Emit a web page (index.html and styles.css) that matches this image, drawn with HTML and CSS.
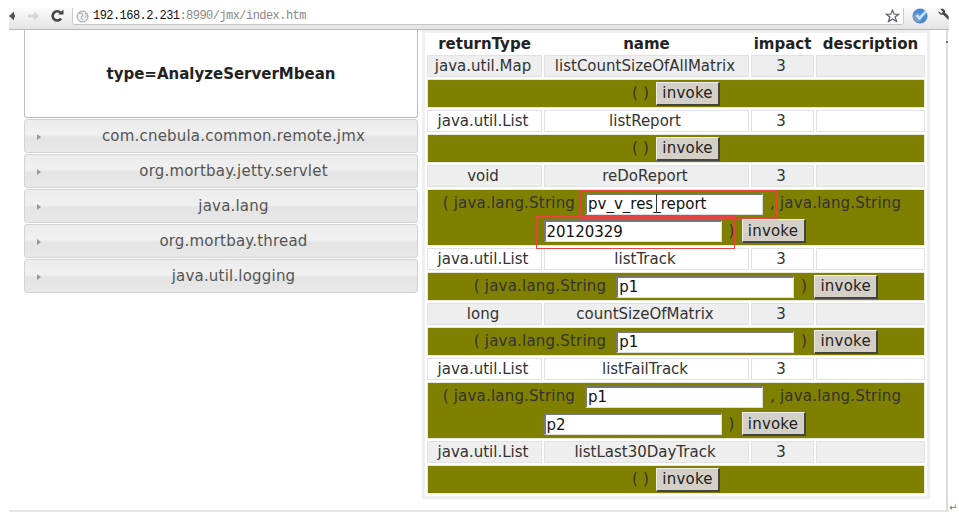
FILE: index.html
```html
<!DOCTYPE html>
<html lang="en">
<head>
<meta charset="utf-8">
<title>jmx</title>
<link rel="stylesheet" href="styles.css">
</head>
<body>
<div class="window">
  <header class="toolbar">
    <svg class="tb-icon back" width="6" height="12" viewBox="0 0 6 12"><path d="M0 6L5 1.500V4.500H6V7.500H5V10.500Z" fill="#555"/></svg>
    <svg class="tb-icon fwd" width="13" height="12" viewBox="0 0 13 12"><path d="M1 4.500H7V1.500L12 6L7 10.500V7.500H1Z" fill="#d4d4d4"/></svg>
    <svg class="tb-icon reload" width="14" height="14" viewBox="0 0 14 14"><path d="M11 9.500A4.600 4.600 0 1 1 10.500 3.600" fill="none" stroke="#444" stroke-width="2.600"/><path d="M8 5.600H13.500V0.500Z" fill="#444"/></svg>
    <div class="omnibox">
      <svg class="globe" width="13" height="13" viewBox="0 0 13 13"><circle cx="6.500" cy="6.500" r="5.500" fill="#eef1f4" stroke="#999"/><path d="M3 3.500L6 3L7 5.500L5 7L6.500 10M9 3L10.500 5.500L9 7.500" fill="none" stroke="#aaa"/></svg>
      <span class="host">192.168.2.231</span><span class="path">:8990/jmx/index.htm</span>
      <svg class="star" width="15" height="14" viewBox="0 0 17 16"><path d="M8.500 1.500L10.500 6H15.500L11.500 9.200L13 14.200L8.500 11.300L4 14.200L5.500 9.200L1.500 6H6.500Z" fill="#fff" stroke="#5a6270" stroke-width="1.400"/></svg>
    </div>
    <svg class="ball" width="16" height="16" viewBox="0 0 18 18"><circle cx="9" cy="9" r="8.500" fill="#4a88d8"/><circle cx="6" cy="11" r="5" fill="#7f9cc0"/><path d="M5 8L8.500 11.500L15.500 4" fill="none" stroke="#bfe4fb" stroke-width="3"/></svg>
    <svg class="wrench" width="11" height="12" viewBox="0 0 11 13"><path d="M0 3L3 6L5 4L2 1C5 0 8 2 7 5L11 9V13L5 7C2 8 0 6 0 3Z" fill="#444"/></svg>
  </header>

  <main class="content">
    <section class="tree">
      <div class="selected">type=AnalyzeServerMbean</div>
      <div class="group"><i class="arrow"></i>com.cnebula.common.remote.jmx</div>
      <div class="group"><i class="arrow"></i>org.mortbay.jetty.servlet</div>
      <div class="group"><i class="arrow"></i>java.lang</div>
      <div class="group"><i class="arrow"></i>org.mortbay.thread</div>
      <div class="group"><i class="arrow"></i>java.util.logging</div>
    </section>

    <section class="panel">
      <table class="ops">
        <colgroup><col class="c1"><col class="c2"><col class="c3"><col class="c4"></colgroup>
        <thead><tr><th>returnType</th><th>name</th><th>impact</th><th>description</th></tr></thead>
        <tbody>
          <tr class="alt"><td>java.util.Map</td><td>listCountSizeOfAllMatrix</td><td>3</td><td></td></tr>
          <tr><td colspan="4" class="args">( ) <button class="invoke">invoke</button></td></tr>
          <tr><td>java.util.List</td><td>listReport</td><td>3</td><td></td></tr>
          <tr><td colspan="4" class="args">( ) <button class="invoke">invoke</button></td></tr>
          <tr class="alt"><td>void</td><td>reDoReport</td><td>3</td><td></td></tr>
          <tr><td colspan="4" class="args wrapped">( java.lang.String <input class="param" value="pv_v_res_report"> , java.lang.String <input class="param" value="20120329"> ) <button class="invoke">invoke</button></td></tr>
          <tr><td>java.util.List</td><td>listTrack</td><td>3</td><td></td></tr>
          <tr><td colspan="4" class="args">( java.lang.String <input class="param" value="p1"> ) <button class="invoke">invoke</button></td></tr>
          <tr class="alt"><td>long</td><td>countSizeOfMatrix</td><td>3</td><td></td></tr>
          <tr><td colspan="4" class="args">( java.lang.String <input class="param" value="p1"> ) <button class="invoke">invoke</button></td></tr>
          <tr><td>java.util.List</td><td>listFailTrack</td><td>3</td><td></td></tr>
          <tr><td colspan="4" class="args wrapped">( java.lang.String <input class="param" value="p1"> , java.lang.String <input class="param" value="p2"> ) <button class="invoke">invoke</button></td></tr>
          <tr class="alt"><td>java.util.List</td><td>listLast30DayTrack</td><td>3</td><td></td></tr>
          <tr><td colspan="4" class="args">( ) <button class="invoke">invoke</button></td></tr>
        </tbody>
      </table>
    </section>
    <div class="scrollbar"><span class="thumb"></span></div>
  </main>
  <div class="mark mark-a"></div>
  <div class="mark mark-b"></div>
  <div class="caret"></div>
  <span class="return">↵</span>
</div>
</body>
</html>
```

FILE: styles.css
```css
html, body {
  margin: 0;
  height: 100%;
  background: #fff;
  overflow: hidden;
}
.window {
  position: relative;
  width: 959px;
  height: 517px;
  padding: 8px 10px 0 9px;
  box-sizing: border-box;
  font-family: "DejaVu Sans", Verdana, sans-serif;
  font-size: 15px;
  color: #333;
}
.toolbar {
  height: 16px;
  padding-bottom: 5px;
  display: flex;
  align-items: center;
  background: linear-gradient(#fbfbfb, #e4e4e4);
  border-bottom: 1px solid #b9b9b9;
}
.tb-icon { flex: none; }
.back { margin-right: 12px; }
.fwd { margin-right: 10px; }
.reload { margin-right: 8px; }
.omnibox {
  flex: 1;
  align-self: stretch;
  display: flex;
  align-items: center;
  height: 16px;
  background: #fff;
  border-left: 1px solid #ccc;
  border-right: 1px solid #ccc;
  border-bottom: 1px solid #c4c4c4;
  border-radius: 0 0 3px 3px;
  padding: 0 3px 0 3px;
  font-family: "Liberation Mono", monospace;
  font-size: 12px;
  letter-spacing: -0.55px;
  margin-right: 8px;
}
.globe { margin-right: 4px; flex: none; }
.host { color: #111; }
.path { color: #888; flex: 1; }
.star { flex: none; }
.ball { flex: none; margin-right: 10px; }
.wrench { flex: none; margin-top: -4px; }
.content {
  display: flex;
  align-items: flex-start;
  height: 480px;
  padding-left: 15px;
  border-bottom: 2px solid #e6e6e2;
}
.tree {
  width: 394px;
  flex: none;
  margin-right: 4px;
}
.selected {
  height: 87px;
  display: flex;
  align-items: center;
  justify-content: center;
  border: 1px solid #bbb;
  border-top: 0;
  border-radius: 0 0 3px 3px;
  background: #fff;
  font-weight: 700;
  color: #222;
  margin-bottom: 1px;
}
.group {
  position: relative;
  height: 32px;
  line-height: 33px;
  margin-bottom: 1px;
  border: 1px solid #d3d3d3;
  border-radius: 3px;
  background: linear-gradient(#ececec 0%, #f0f0f0 45%, #e4e4e4 55%, #e8e8e8 100%);
  text-align: center;
  color: #555;
  padding-left: 25px;
  letter-spacing: 0.2px;
}
.arrow {
  position: absolute;
  left: 12px;
  top: 14px;
  border-left: 4px solid #999;
  border-top: 3px solid transparent;
  border-bottom: 3px solid transparent;
}
.panel {
  width: 502px;
  flex: none;
  padding: 3px 3px 3px;
  background: #efefef;
}
.ops {
  width: 502px;
  table-layout: fixed;
  border-collapse: separate;
  border-spacing: 2px;
  background: #fff;
  font-size: 15px;
  margin: 0;
}
.c1 { width: 115px; }
.c2 { width: 205px; }
.c3 { width: 63px; }
.ops th {
  height: 18px;
  padding: 0;
  font-weight: 700;
  color: #222;
  line-height: 18px;
}
.ops td {
  height: 20px;
  padding: 0 3px 0 0;
  border: 1px solid #e2e2e2;
  background: #fff;
  text-align: center;
  line-height: 20px;
}
.ops tr.alt td { background: #eee; }
.ops td.args {
  height: auto;
  padding: 0 4px;
  background: #808000;
  border-color: #e8e8d8;
  line-height: 27px;
  letter-spacing: 0.2px;
  color: #333;
}
.ops td.wrapped {
  padding: 0 12px 0 4px;
  line-height: 27.5px;
}
.param {
  width: 178px;
  height: 22px;
  box-sizing: border-box;
  padding: 0 1px;
  margin: 0 2px 0 5px;
  border-width: 2px 1px 1px 2px;
  border-style: solid;
  border-color: #777 #ddd #ddd #777;
  background: #fff;
  color: #111;
  font: 15px "DejaVu Sans", Verdana, sans-serif;
  vertical-align: middle;
}
.invoke {
  width: 64px;
  height: 24px;
  padding: 0;
  margin-left: 2px;
  border-width: 1px 2px 2px 1px;
  border-style: solid;
  border-color: #eee #444 #444 #eee;
  background: #d4d0c8;
  color: #222;
  font: 15px "DejaVu Sans", Verdana, sans-serif;
  letter-spacing: 0.2px;
  vertical-align: middle;
}
.scrollbar {
  position: absolute;
  left: 946px;
  top: 30px;
  width: 2px;
  height: 480px;
  background: #dcdcd8;
}
.thumb {
  position: absolute;
  left: 0;
  top: 11px;
  width: 2px;
  height: 2px;
  background: #777;
}
.mark {
  position: absolute;
  box-sizing: border-box;
  border: 1px solid #e84444;
  pointer-events: none;
}
.mark-a { left: 580px; top: 190px; width: 197px; height: 29px; }
.mark-b { left: 536px; top: 216px; width: 199px; height: 33px; }
.caret {
  position: absolute;
  left: 656px;
  top: 194px;
  width: 1px;
  height: 19px;
  background: #333;
}
.return {
  position: absolute;
  left: 949px;
  top: 502px;
  font-size: 10px;
  color: #777;
}
```
